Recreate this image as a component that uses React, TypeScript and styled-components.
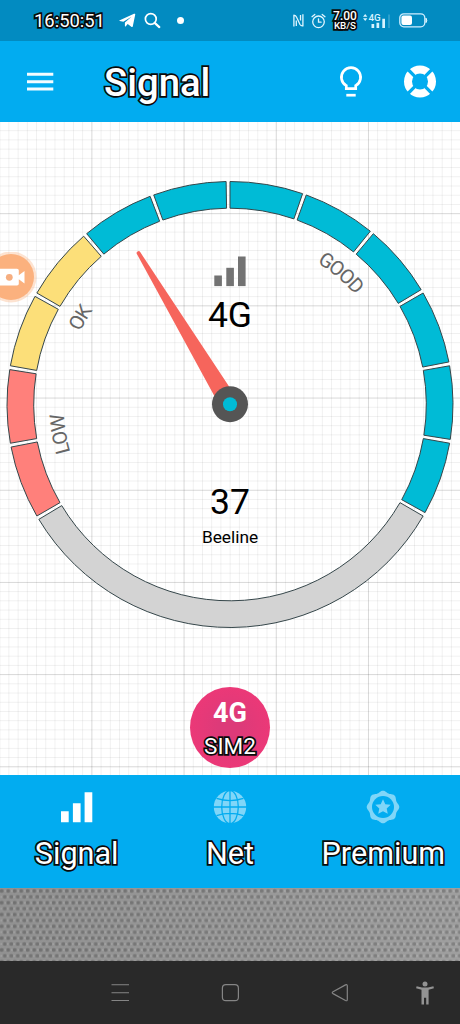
import React from "react";
import styled, { createGlobalStyle, css } from "styled-components";

const GlobalStyle = createGlobalStyle`
  * { box-sizing: border-box; }
  body { margin: 0; background: #292929; font-family: Roboto, "Liberation Sans", sans-serif; }
  svg { display: block; flex: none; }
`;

const outlined = css<{ $outline?: number }>`
  color: #fff;
  -webkit-text-stroke: ${(p) => p.$outline ?? 3.4}px #0a0a0a;
  paint-order: stroke fill;
  stroke-linejoin: round;
`;

const Screen = styled.div`
  width: 460px;
  height: 1024px;
  display: flex;
  flex-direction: column;
  overflow: hidden;
`;

const StatusBar = styled.div`
  height: 41px;
  flex: none;
  display: flex;
  align-items: center;
  padding: 0 32px 0 34px;
  background: #028bc1;
`;

const Clock = styled.span`
  ${outlined}
  width: 85px;
  font-size: 18.4px;
  line-height: 22px;
  white-space: nowrap;
`;

const StatusGroup = styled.div<{ $end?: boolean }>`
  display: flex;
  align-items: center;
  gap: ${(p) => (p.$end ? 7 : 8)}px;
  margin-left: ${(p) => (p.$end ? "auto" : "0")};
`;

const Dot = styled.span`
  width: 7px;
  height: 7px;
  margin-left: 8px;
  border-radius: 50%;
  background: #fff;
`;

const Rate = styled.div`
  ${outlined}
  width: 24px;
  font-size: 12px;
  font-weight: 500;
  line-height: 10px;
  white-space: nowrap;
  display: flex;
  flex-direction: column;
  align-items: center;
`;

const RateUnit = styled.span`
  font-size: 9.8px;
  line-height: 9px;
`;

const Header = styled.header`
  height: 81px;
  flex: none;
  display: flex;
  align-items: center;
  padding: 0 23px 0 25px;
  background: #02acf0;
`;

const Title = styled.h1`
  ${outlined}
  margin: 2px auto 0 49px;
  font-size: 38.3px;
  font-weight: 500;
  line-height: 44px;
`;

const HeaderActions = styled.div`
  display: flex;
  align-items: center;
  gap: 40.5px;
`;

const Board = styled.main`
  position: relative;
  height: 653px;
  flex: none;
  display: flex;
  flex-direction: column;
  align-items: center;
  padding-top: 53px;
  background-color: #fff;
  background-image:
    linear-gradient(90deg, rgba(0, 0, 0, 0.1) 1.4px, transparent 1.4px),
    linear-gradient(rgba(0, 0, 0, 0.1) 1.4px, transparent 1.4px),
    linear-gradient(90deg, rgba(0, 0, 0, 0.06) 1px, transparent 1px),
    linear-gradient(rgba(0, 0, 0, 0.06) 1px, transparent 1px);
  background-size: 92.2px 92.2px, 92.2px 92.2px, 9.22px 9.22px, 9.22px 9.22px;
  background-position: -0.8px -1px;
`;

const Recorder = styled.div`
  position: absolute;
  left: -14px;
  top: 130px;
`;

const SimButton = styled.button`
  width: 80px;
  height: 81px;
  margin: 62px 0 0;
  padding: 11px 0 0;
  border: 0;
  border-radius: 50%;
  display: flex;
  flex-direction: column;
  align-items: center;
  font-family: inherit;
  background: radial-gradient(circle, #dd3a79 20%, #ee3877 80%);
`;

const SimNetwork = styled.span`
  color: #fff;
  font-size: 27px;
  font-weight: 700;
  line-height: 30px;
`;

const SimName = styled.span`
  ${outlined}
  margin-top: 5px;
  font-size: 22.5px;
  line-height: 26px;
`;

const Tabs = styled.nav`
  height: 113px;
  flex: none;
  display: grid;
  grid-template-columns: repeat(3, 1fr);
  background: #02acf0;
`;

const Tab = styled.div`
  display: flex;
  flex-direction: column;
  align-items: center;
  padding-top: 16px;
`;

const TabLabel = styled.span`
  ${outlined}
  margin-top: 13px;
  font-size: 30.6px;
  line-height: 36px;
`;

const Fabric = styled.div`
  height: 73px;
  flex: none;
  background-color: #999;
  background-image:
    linear-gradient(90deg, rgba(0, 0, 0, 0.05), rgba(255, 255, 255, 0.06)),
    radial-gradient(ellipse 3px 2.6px at 25% 25%, #767676 40%, transparent),
    radial-gradient(ellipse 3px 2.6px at 75% 75%, #797979 40%, transparent),
    radial-gradient(ellipse 2px 1.5px at 75% 25%, #adadad, transparent),
    radial-gradient(ellipse 2px 1.5px at 25% 75%, #adadad, transparent);
  background-size: 100% 100%, 6.5px 11.8px, 6.5px 11.8px, 6.5px 11.8px, 6.5px 11.8px;
`;

const SystemNav = styled.div`
  height: 63px;
  flex: none;
  display: flex;
  align-items: center;
  justify-content: flex-end;
  gap: 88px;
  padding-right: 26px;
  background: #292929;
`;

const BackAndAccess = styled.div`
  display: flex;
  align-items: center;
  gap: 66px;
`;

const CX = 230;
const CY = 404.5;
const OUTER = 223;
const INNER = 196.3;
const LABEL = 166.5;

const point = (r: number, deg: number) => {
  const a = (deg * Math.PI) / 180;
  return `${(CX + r * Math.cos(a)).toFixed(2)} ${(CY + r * Math.sin(a)).toFixed(2)}`;
};

const sector = (from: number, to: number) =>
  `M${point(OUTER, from)} A${OUTER} ${OUTER} 0 0 1 ${point(OUTER, to)} L${point(INNER, to)} A${INNER} ${INNER} 0 0 0 ${point(INNER, from)} Z`;

const labelArc = (mid: number) =>
  `M${point(LABEL, mid - 25)} A${LABEL} ${LABEL} 0 0 1 ${point(LABEL, mid + 25)}`;

const segmentColors = ["#ff807b", "#ff807b", "#fcdf79", "#fcdf79", ...Array(8).fill("#00bbd6")];
const zones = [
  { name: "LOW", mid: 170 },
  { name: "OK", mid: 210 },
  { name: "GOOD", mid: 310 },
];

function Gauge() {
  return (
    <svg width="460" height="450" viewBox="0 175 460 450" overflow="visible" fontFamily="Roboto, sans-serif">
      <g stroke="#35464a" strokeWidth="1">
        {segmentColors.map((fill, i) => (
          <path key={i} d={sector(150 + i * 20, 169 + i * 20)} fill={fill} />
        ))}
        <path d={sector(30, 149)} fill="#d3d3d3" />
      </g>
      {zones.map((z) => (
        <g key={z.name}>
          <path id={`zone-${z.name}`} d={labelArc(z.mid)} fill="none" />
          <text fontSize="20" fill="#666" letterSpacing="-1.2" textAnchor="middle">
            <textPath href={`#zone-${z.name}`} startOffset="50%">{z.name}</textPath>
          </text>
        </g>
      ))}
      <g fill="#737373">
        <rect x="214.3" y="275.5" width="7.6" height="10.6" />
        <rect x="226.3" y="267.8" width="7.6" height="18.3" />
        <rect x="238" y="256.5" width="7.6" height="29.6" />
      </g>
      <g textAnchor="middle" fill="#000">
        <text x="230" y="326.8" fontSize="35.5">4G</text>
        <text x="230" y="514.4" fontSize="35.5">37</text>
        <text x="230" y="543.3" fontSize="17.3">Beeline</text>
      </g>
      <path d="M136.9 254.1a1.9 1.9 0 0 1 3.3-2L238 400 222 410Z" fill="#f6655c" />
      <circle cx={CX} cy={CY - 0.3} r="18" fill="#555" />
      <circle cx={CX} cy={CY - 0.3} r="7" fill="#00bbd6" />
    </svg>
  );
}

const SignalBars = () => (
  <svg width="32" height="32" viewBox="0 0 32 32" fill="#fff">
    <path d="M0 20.3h7.700v10.900H0zM11.900 12.300h7.700v18.900h-7.700zM23.600 1.200h7.700v30h-7.700z" />
  </svg>
);

const Globe = () => (
  <svg width="34" height="34" viewBox="0 0 34 34" style={{ margin: "-1px 0" }}>
    <circle cx="17" cy="17" r="16.2" fill="#80d6f8" />
    <g fill="none" stroke="#02acf0" strokeWidth="1.3">
      <path d="M17 0v34M0 17h34M3.500 8.400Q17 12.800 30.500 8.400M3.500 25.600Q17 21.200 30.500 25.600" />
      <ellipse cx="17" cy="17" rx="8.300" ry="16.500" />
    </g>
  </svg>
);

const starPath = Array.from({ length: 10 }, (_, i) => {
  const a = ((i * 36 - 90) * Math.PI) / 180;
  const r = i % 2 ? 3.9 : 8.1;
  return `${i ? "L" : "M"}${(17 + r * Math.cos(a)).toFixed(2)} ${(17.3 + r * Math.sin(a)).toFixed(2)}`;
}).join("") + "Z";

const scallop = Array.from({ length: 96 }, (_, i) => {
  const a = (i * 3.75 * Math.PI) / 180;
  const r = 15.4 + 0.9 * Math.cos(8 * a);
  return `${i ? "L" : "M"}${(17 + r * Math.cos(a)).toFixed(2)} ${(17 + r * Math.sin(a)).toFixed(2)}`;
}).join("") + "Z";

const Badge = () => (
  <svg width="34" height="34" viewBox="0 0 34 34" style={{ margin: "-1px 0" }}>
    <path d={scallop} fill="#80d6f8" />
    <circle cx="17" cy="17" r="11" fill="#02acf0" />
    <path d={starPath} fill="#80d6f8" />
  </svg>
);

const tabs = [
  { label: "Signal", icon: <SignalBars /> },
  { label: "Net", icon: <Globe /> },
  { label: "Premium", icon: <Badge /> },
];

export default function App() {
  return (
    <Screen>
      <GlobalStyle />
      <StatusBar>
        <Clock>16:50:51</Clock>
        <StatusGroup>
          <svg width="17" height="15" viewBox="0 0 17 15" fill="#fff">
            <path d="M.8 7.2 15 .8c1-.4 1.4.1 1.2 1l-2.400 11.400c-.2.9-.8 1.100-1.500.6L8.700 11l-1.900 2.200c-.4.5-.9.3-.9-.3V9.600l6.600-5.800-8.200 5L.8 8.100c-.6-.2-.6-.6 0-.9Z" />
          </svg>
          <svg width="17" height="17" viewBox="0 0 17 17" fill="none" stroke="#fff" strokeWidth="1.7">
            <circle cx="6.8" cy="7" r="5.4" />
            <path d="m10.700 10.900 4.600 4.200" strokeWidth="2.2" strokeLinecap="round" />
          </svg>
          <Dot />
        </StatusGroup>
        <StatusGroup $end>
          <svg width="11" height="15" viewBox="0 0 11 15" fill="none" stroke="#e2f6ff" strokeWidth="1.3" strokeLinejoin="round">
            <path d="M.9 13.600V2.100Q2.800 2.100 3.600 4.200L7 11.500Q8 13.200 9.900 12.900V1.200M3.300 13V7.500M7.500 2v5.500" />
          </svg>
          <svg width="15" height="16" viewBox="0 0 15 16" fill="none" stroke="#e2f6ff" strokeWidth="1.3" strokeLinecap="round">
            <circle cx="7.500" cy="8.800" r="5.800" />
            <path d="M7.500 5.800v3.400h2.600M1 3.700l2.800-2.300M14 3.700l-2.800-2.300" />
          </svg>
          <Rate>
            <span>7.00</span>
            <RateUnit>KB/S</RateUnit>
          </Rate>
          <svg width="28" height="18" viewBox="0 0 28 18" fill="#d8f3ff" style={{ marginLeft: -1, marginRight: 1 }}>
            <path d="m0 4.700 2.200-2.800 2.200 2.800zM0 6.300h4.400L2.200 9.100z" />
            <text x="5.500" y="9" fontSize="9.800" fontFamily="Roboto, sans-serif" fontWeight="500">4G</text>
            <path d="M8.500 12h2.700v4H8.500zM13.500 10.800h2.700V16h-2.700zM19.300 6.800H22V16h-2.700z" />
            <path d="M25 2.500h2V16h-2z" opacity=".2" />
          </svg>
          <svg width="29" height="16" viewBox="0 0 29 16">
            <rect x=".8" y=".8" width="25" height="13" rx="4" fill="none" stroke="#d0eeff" strokeWidth="1.3" />
            <rect x="2.400" y="2.500" width="10.600" height="9.600" rx="2" fill="#fff" />
            <path d="M27 5.200q1.600 2.200 0 4.400z" fill="#e6f7ff" stroke="#e6f7ff" />
          </svg>
        </StatusGroup>
      </StatusBar>
      <Header>
        <svg width="30" height="22" viewBox="0 0 30 22" fill="#f4fcff">
          <path d="M2 1.800h26.300v3H2zM2 9.200h26.300v3H2zM2 16.400h26.300v3H2z" />
        </svg>
        <Title>Signal</Title>
        <HeaderActions>
          <svg width="24" height="34" viewBox="0 0 24 34" fill="none" stroke="#fff" strokeWidth="2.700">
            <path d="M7.300 23.600v-3A9.600 9.600 0 1 1 16.700 20.600V23.600Z" />
            <path d="M7.300 30.200h9.400" />
          </svg>
          <svg width="34" height="34" viewBox="0 0 34 34" fill="none">
            <circle cx="17" cy="16.500" r="12" stroke="#fff" strokeWidth="8" />
            <path d="m5 4.500 6.800 6.800M29 4.500l-6.800 6.800M5 28.500l6.800-6.800M29 28.500l-6.800-6.800" stroke="#02acf0" strokeWidth="3.200" />
          </svg>
        </HeaderActions>
      </Header>
      <Board>
        <Gauge />
        <SimButton>
          <SimNetwork>4G</SimNetwork>
          <SimName>SIM2</SimName>
        </SimButton>
        <Recorder>
          <svg width="52" height="52" viewBox="0 0 52 52">
            <circle cx="25" cy="25" r="25.500" fill="#fbb88c" opacity=".4" />
            <circle cx="25" cy="25" r="23" fill="#fbb17e" />
            <path d="M10 16.800h21q1.800 0 1.800 1.800v4.600l5.700-4.300v12.600l-5.700-4.300v4.500q0 1.800-1.800 1.800H10Z" fill="#fff" />
            <circle cx="23.300" cy="25.300" r="3.400" fill="#f6ae80" />
          </svg>
        </Recorder>
      </Board>
      <Tabs>
        {tabs.map((t) => (
          <Tab key={t.label}>
            {t.icon}
            <TabLabel>{t.label}</TabLabel>
          </Tab>
        ))}
      </Tabs>
      <Fabric />
      <SystemNav>
        <svg width="22" height="22" viewBox="0 0 22 22" stroke="#858585" strokeWidth="1.100">
          <path d="M1.500 2.800H19M1.500 10.700H19M1.500 18.500H19" />
        </svg>
        <svg width="22" height="22" viewBox="0 0 22 22" fill="none" stroke="#858585" strokeWidth="1.200">
          <rect x="2.400" y="2.700" width="16" height="16" rx="3.500" />
        </svg>
        <BackAndAccess>
          <svg width="20" height="20" viewBox="0 0 20 20" fill="none" stroke="#858585" strokeWidth="1.200" strokeLinejoin="round">
            <path d="M3 8.800 15.500 1.900q1.800-.8 1.800 1v13.600q0 1.800-1.800 1L3 10.600q-1.500-.9 0-1.800Z" />
          </svg>
          <svg width="18" height="24" viewBox="0 0 18 24" fill="#939393">
            <circle cx="9" cy="2.900" r="2.500" />
            <path d="M.6 5.300 6 6.600h6l5.400-1.300.5 2L12.600 8.700V23.500h-2.400v-6.800H8v6.800H5.500V8.700L.1 7.300Z" />
          </svg>
        </BackAndAccess>
      </SystemNav>
    </Screen>
  );
}
